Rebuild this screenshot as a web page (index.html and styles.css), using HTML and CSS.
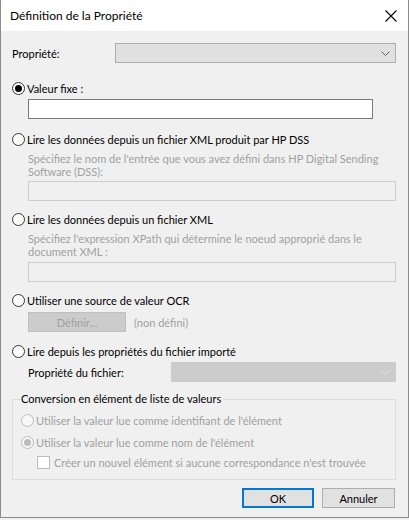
FILE: index.html
```html
<!DOCTYPE html>
<html lang="fr">
<head>
<meta charset="utf-8">
<title>Définition de la Propriété</title>
<link rel="stylesheet" href="styles.css">
</head>
<body>
<div class="window">
  <header class="titlebar">
    <span class="title">Définition de la Propriété</span>
    <svg class="close" width="12" height="12" viewBox="0 0 12 12"><path d="M0.5 0.5L11.5 11.5M11.5 0.5L0.5 11.5" stroke="#000" stroke-width="1.1" fill="none"/></svg>
  </header>
  <main class="content">
    <div class="prop-row">
      <span class="label">Propriété:</span>
      <div class="combo combo-main">
        <svg class="chev" width="9" height="5" viewBox="0 0 9 5"><path d="M0.5 0.5L4.5 4.5L8.5 0.5" stroke="#606060" fill="none"/></svg>
      </div>
    </div>

    <div class="radio-row r1"><span class="radio checked"></span><span>Valeur fixe :</span></div>
    <div class="textbox tb-fixed"></div>

    <div class="radio-row r2"><span class="radio"></span><span>Lire les données depuis un fichier XML produit par HP DSS</span></div>
    <p class="desc d2">Spécifiez le nom de l'entrée que vous avez défini dans HP Digital Sending<br>Software (DSS):</p>
    <div class="textbox disabled tb2"></div>

    <div class="radio-row r3"><span class="radio"></span><span>Lire les données depuis un fichier XML</span></div>
    <p class="desc d3">Spécifiez l'expression XPath qui détermine le noeud approprié dans le<br>document XML :</p>
    <div class="textbox disabled tb3"></div>

    <div class="radio-row r4"><span class="radio"></span><span>Utiliser une source de valeur OCR</span></div>
    <div class="ocr-row">
      <span class="btn btn-disabled">Définir...</span>
      <span class="muted">(non défini)</span>
    </div>

    <div class="radio-row r5"><span class="radio"></span><span>Lire depuis les propriétés du fichier importé</span></div>
    <div class="file-row">
      <span class="label">Propriété du fichier:</span>
      <div class="combo combo-disabled">
        <svg class="chev" width="9" height="5" viewBox="0 0 9 5"><path d="M0.5 0.5L4.5 4.5L8.5 0.5" stroke="#e0e0e0" fill="none"/></svg>
      </div>
    </div>

    <fieldset class="group">
      <legend>Conversion en élément de liste de valeurs</legend>
      <div class="radio-row g1 muted"><span class="radio radio-disabled"></span><span>Utiliser la valeur lue comme identifiant de l'élément</span></div>
      <div class="radio-row g2 muted"><span class="radio radio-disabled checked"></span><span>Utiliser la valeur lue comme nom de l'élément</span></div>
      <div class="check-row muted"><span class="checkbox"></span><span>Créer un nouvel élément si aucune correspondance n'est trouvée</span></div>
    </fieldset>

    <div class="actions">
      <span class="btn btn-default">OK</span>
      <span class="btn">Annuler</span>
    </div>
  </main>
</div>
</body>
</html>
```
FILE: styles.css
```css
html { background: #f0f0f0; }
body {
  margin: 0;
  font-family: Lato, "Liberation Sans", sans-serif;
  font-size: 11px;
  color: #000;
  white-space: nowrap;
}
.window {
  width: 409px;
  height: 518px;
  box-sizing: border-box;
  border: 1px solid #8c8c8c;
  border-top: none;
  background: #f0f0f0;
  display: flex;
  flex-direction: column;
}
.titlebar {
  height: 31px;
  flex: none;
  background: #fff;
  display: flex;
  align-items: center;
  justify-content: space-between;
  padding: 0 11px 0 9px;
}
.title { font-size: 12px; }
.content {
  padding: 0 12px 0 11px;
  display: flex;
  flex-direction: column;
}
.label { color: #000; }
.prop-row {
  margin-top: 12px;
  height: 20px;
  display: flex;
  align-items: center;
  justify-content: space-between;
}
.combo {
  box-sizing: border-box;
  height: 20px;
  display: flex;
  align-items: center;
  justify-content: flex-end;
  padding-right: 5px;
}
.combo-main {
  width: 281px;
  background: #e0e0e0;
  border: 1px solid #adadad;
}
.combo-disabled {
  width: 225px;
  background: #cccccc;
  border: 1px solid #cccccc;
}
.radio-row {
  height: 16px;
  display: flex;
  align-items: center;
  gap: 2px;
}
.radio {
  width: 13px;
  height: 13px;
  box-sizing: border-box;
  border: 1px solid #333;
  border-radius: 50%;
  background: #fff;
  display: flex;
  align-items: center;
  justify-content: center;
  flex: none;
}
.radio.checked::after {
  content: "";
  width: 7px;
  height: 7px;
  border-radius: 50%;
  background: #000;
}
.radio-disabled {
  border-color: #bcbcbc;
  background: #f7f7f7;
}
.radio-disabled.checked::after { background: #bcbcbc; }
.r1 { margin-top: 17px; }
.textbox {
  box-sizing: border-box;
  height: 20px;
  margin-left: 16px;
}
.tb-fixed {
  margin-top: 3px;
  width: 345px;
  background: #fff;
  border: 1px solid #7a7a7a;
}
.disabled {
  background: #f0f0f0;
  border: 1px solid #cccccc;
}
.r2 { margin-top: 12px; }
.desc {
  margin: 0 0 0 16px;
  color: #a0a0a0;
  line-height: 13px;
}
.d2 { margin-top: 5px; }
.tb2 { margin-top: 3px; }
.r3 { margin-top: 10px; }
.d3 { margin-top: 5px; }
.tb3 { margin-top: 4px; }
.r4 { margin-top: 10px; }
.ocr-row {
  margin-top: 4px;
  margin-left: 16px;
  display: flex;
  align-items: center;
  gap: 8px;
}
.muted { color: #a0a0a0; }
.btn {
  box-sizing: border-box;
  height: 20px;
  display: flex;
  align-items: center;
  justify-content: center;
  background: #e1e1e1;
  border: 1px solid #adadad;
  width: 73px;
}
.btn-disabled {
  width: 98px;
  background: #cccccc;
  border-color: #bfbfbf;
  color: #a0a0a0;
}
.r5 { margin-top: 11px; }
.file-row {
  margin-top: 3px;
  margin-left: 16px;
  height: 20px;
  display: flex;
  align-items: center;
  justify-content: space-between;
}
.group {
  margin: 9px 0 0 0;
  padding: 0 8px 9px 8px;
  border: 1px solid #dcdcdc;
  min-width: 0;
}
.group legend {
  padding: 0 2px 0 0;
  line-height: 16px;
  color: #000;
}
.g1 { margin-top: 5px; }
.g2 { margin-top: 6px; }
.check-row {
  margin-top: 4px;
  margin-left: 16px;
  display: flex;
  align-items: center;
  gap: 4px;
  height: 16px;
}
.checkbox {
  width: 13px;
  height: 13px;
  box-sizing: border-box;
  border: 1px solid #bcbcbc;
  background: #fff;
  flex: none;
}
.actions {
  margin-top: 8px;
  display: flex;
  justify-content: flex-end;
  gap: 8px;
  padding-right: 1px;
}
.btn-default {
  width: 72px;
  border: 2px solid #0078d7;
}
```
